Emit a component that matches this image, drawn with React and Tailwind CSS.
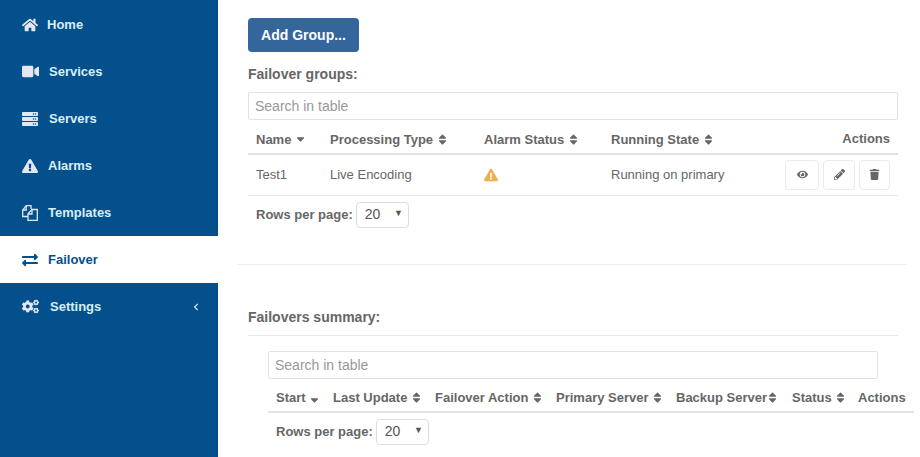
import {
  FaHome,
  FaVideo,
  FaServer,
  FaExclamationTriangle,
  FaExchangeAlt,
  FaCogs,
  FaChevronLeft,
  FaEye,
  FaPencilAlt,
  FaTrash,
  FaSort,
  FaSortDown,
} from "react-icons/fa";

// two overlapping sheets with folded corners
const FilesIcon = ({ className }) => (
  <svg viewBox="0 0 16 16" width="16" height="16" fill="none" stroke="currentColor" strokeWidth="1.3" className={className}>
    <path d="M6 11.5H.7V5.2L4.2.7H9V4" />
    <path d="M4.2.7V5H.7" />
    <path d="M15.3 4.5V15.3H6V8.8L10 4.5Z" />
    <path d="M10 4.5V9H6" />
  </svg>
);

const navItems = [
  { label: "Home", icon: FaHome, iconSize: "text-[16px]", gap: "gap-[9px]" },
  { label: "Services", icon: FaVideo, iconSize: "text-[17px]", gap: "gap-[10px]" },
  { label: "Servers", icon: FaServer, iconSize: "text-[16px]", gap: "gap-[11px]" },
  { label: "Alarms", icon: FaExclamationTriangle, iconSize: "text-[16px]", gap: "gap-[10px]" },
  { label: "Templates", icon: FilesIcon, iconSize: "", gap: "gap-[10px]" },
  { label: "Failover", icon: FaExchangeAlt, iconSize: "text-[16px]", gap: "gap-[10px]", active: true },
  { label: "Settings", icon: FaCogs, iconSize: "text-[17px]", gap: "gap-[11px]", arrow: true },
];

const Sidebar = () => (
  <aside className="w-[218px] shrink-0 bg-[#03508c] min-h-[457px]">
    <nav className="pt-px">
      {navItems.map((item) => {
        const Icon = item.icon;
        return (
          <div
            key={item.label}
            className={`h-[47px] flex items-center pl-[22px] pr-[18px] font-bold text-[13px] ${item.gap} ${
              item.active ? "bg-white text-[#03508c]" : "text-[#d8eef5]"
            }`}
          >
            <Icon className={`${item.iconSize} shrink-0 ${item.active ? "" : "text-[#e4e6f0]"}`} />
            <span>{item.label}</span>
            {item.arrow && <FaChevronLeft className="ml-auto text-[8px] text-[#d8eef5]" />}
          </div>
        );
      })}
    </nav>
  </aside>
);

const SearchBox = ({ width }) => (
  <input
    placeholder="Search in table"
    readOnly
    className={`${width} h-7 block border border-[#e2e2e2] rounded-[2px] px-1.5 text-[14px] text-[#555] placeholder:text-[#999] outline-none`}
  />
);

const RowsPerPage = () => (
  <div className="flex items-center gap-[3px] pl-2 font-bold text-[13px] text-[#666]">
    <span>Rows per page:</span>
    <div className="w-[53px] h-[26px] border border-[#ddd] rounded-[4px] flex items-center justify-between pl-[8px] pr-[5px] font-normal text-[14px] text-[#555]">
      <span>20</span>
      <span className="text-[9px] -mt-[2px]">▼</span>
    </div>
  </div>
);

const Head = ({ children, sort = FaSort, tight = false, sortClass = "align-[-2px]", className = "" }) => {
  const Sort = sort;
  return (
    <th className={`px-2 text-left font-bold text-[13px] text-[#666] whitespace-nowrap ${className}`}>
      {children}
      {tight ? "" : " "}
      <Sort className={`inline text-[13px] -ml-px ${sortClass}`} />
    </th>
  );
};

const ActionButton = ({ icon: Icon, width }) => (
  <span className={`${width} h-[30px] shrink-0 border border-[#eaeaea] rounded-[4px] flex items-center justify-center text-[#666] text-[11px]`}>
    <Icon />
  </span>
);

const GroupsTable = () => (
  <table className="w-[650px] table-fixed border-collapse">
    <colgroup>
      <col className="w-[74px]" />
      <col className="w-[154px]" />
      <col className="w-[127px]" />
      <col className="w-[180px]" />
      <col />
    </colgroup>
    <thead>
      <tr className="h-[34px] border-b-2 border-[#e2e2e2]">
        <Head sort={FaSortDown} sortClass="align-[1px]" className="pt-[7px]">Name</Head>
        <Head className="pt-[7px]">Processing Type</Head>
        <Head className="pt-[7px]">Alarm Status</Head>
        <Head className="pt-[7px]">Running State</Head>
        <th className="px-2 pt-[5px] text-right font-bold text-[13px] text-[#666]">Actions</th>
      </tr>
    </thead>
    <tbody>
      <tr className="h-[41px] border-b border-[#e8e8e8] text-[13px] text-[#666]">
        <td className="px-2">Test1</td>
        <td className="px-2">Live Encoding</td>
        <td className="px-2">
          <FaExclamationTriangle className="text-[#f0ad4e] text-[14px]" />
        </td>
        <td className="px-2 whitespace-nowrap">Running on primary</td>
        <td className="pl-0 pr-2">
          <div className="flex justify-end gap-[4px]">
            <ActionButton icon={FaEye} width="w-[34px]" />
            <ActionButton icon={FaPencilAlt} width="w-[32px]" />
            <ActionButton icon={FaTrash} width="w-[31px]" />
          </div>
        </td>
      </tr>
    </tbody>
  </table>
);

const SummaryTable = () => (
  <table className="w-[646px] table-fixed border-collapse">
    <colgroup>
      <col className="w-[57px]" />
      <col className="w-[102px]" />
      <col className="w-[121px]" />
      <col className="w-[120px]" />
      <col className="w-[116px]" />
      <col className="w-[66px]" />
      <col />
    </colgroup>
    <thead>
      <tr className="h-[33px] border-b-2 border-[#e2e2e2]">
        <Head sort={FaSortDown} className="pt-[7px]">Start</Head>
        <Head className="pt-[7px]">Last Update</Head>
        <Head className="pt-[7px]">Failover Action</Head>
        <Head className="pt-[7px]">Primary Server</Head>
        <Head tight className="pt-[7px]">Backup Server</Head>
        <Head className="pt-[7px]">Status</Head>
        <th className="px-2 pt-[7px] text-left font-bold text-[13px] text-[#666]">Actions</th>
      </tr>
    </thead>
  </table>
);

const App = () => (
  <div className="flex h-[457px] w-[920px] overflow-hidden bg-white font-['Liberation_Sans',Arial,sans-serif]">
    <Sidebar />
    <main className="flex-1 min-w-0 pt-[18px]">
      <div className="px-[30px]">
        <button className="h-[34px] w-[111px] rounded-[4px] bg-[#34659b] text-white font-bold text-[14px]">
          Add Group...
        </button>
        <h3 className="mt-[14px] h-[26px] font-bold text-[14px] leading-[17px] text-[#666]">Failover groups:</h3>
        <SearchBox width="w-[650px]" />
        <GroupsTable />
        <div className="mt-[6px]">
          <RowsPerPage />
        </div>
      </div>
      <hr className="mt-[36px] ml-[19px] mr-[13px] border-[#eeeeee]" />
      <div className="px-[30px]">
        <h3 className="mt-[44px] pb-[9px] border-b border-[#e8e8e8] font-bold text-[14px] leading-[17px] text-[#666] w-[650px]">
          Failovers summary:
        </h3>
        <div className="ml-[20px] mt-[15px]">
          <SearchBox width="w-[610px]" />
          <SummaryTable />
          <div className="mt-[6px]">
            <RowsPerPage />
          </div>
        </div>
      </div>
    </main>
  </div>
);

export default App;
